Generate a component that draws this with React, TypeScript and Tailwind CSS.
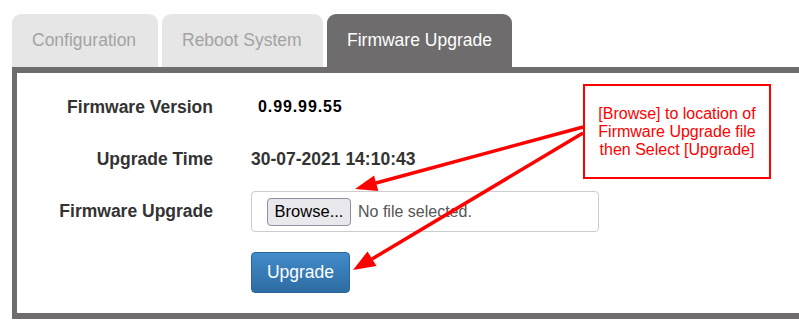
import React from 'react';

const tabs = [
  { label: 'Configuration', width: 'w-[146px]', active: false },
  { label: 'Reboot System', width: 'w-[161px]', active: false },
  { label: 'Firmware Upgrade', width: 'w-[185px]', active: true },
];

const App = () => {
  return (
    <div
      className="relative w-[799px] h-[332px] overflow-hidden bg-white pt-[14px] pl-[12px]"
      style={{ fontFamily: '"Liberation Sans", Arial, sans-serif' }}
    >
      {/* Tabs */}
      <div className="flex gap-[4px]">
        {tabs.map((t) => (
          <div
            key={t.label}
            className={`${t.width} h-[53px] rounded-t-[9px] pl-5 flex items-center text-[17.5px] ${
              t.active ? 'bg-[#6e6c6c] text-white pb-[1px]' : 'bg-[#e6e6e6] text-[#a3a3a3]'
            }`}
          >
            {t.label}
          </div>
        ))}
      </div>

      {/* Panel */}
      <div className="w-[800px] h-[252px] border-t-[6px] border-l-[5px] border-b-[6px] border-[#6e6c6c] pt-[8px]">
        <div className="flex items-center h-[52px]">
          <div className="w-[196px] text-right font-bold text-[17.5px] text-[#333]">Firmware Version</div>
          <div className="ml-[45px] font-bold text-[16px] text-black tracking-[0.9px]">0.99.99.55</div>
        </div>
        <div className="flex items-center h-[52px]">
          <div className="w-[196px] text-right font-bold text-[17.5px] text-[#333]">Upgrade Time</div>
          <div className="ml-[38px] font-bold text-[17.5px] text-[#333]">30-07-2021 14:10:43</div>
        </div>
        <div className="flex items-center mt-[6px] h-[41px]">
          <div className="w-[196px] text-right font-bold text-[17.5px] text-[#333]">Firmware Upgrade</div>
          <div className="ml-[38px] w-[348px] h-[41px] border border-[#cccccc] rounded-[4px] flex items-center pl-[15px] gap-[7px]">
            <div className="w-[84px] h-[28px] bg-[#e9e9ed] border border-[#8f8f9d] rounded-[4px] flex items-center justify-center text-[16.5px] text-black">
              Browse...
            </div>
            <span className="text-[16px] text-[#555]">No file selected.</span>
          </div>
        </div>
        <div className="flex mt-[20px]">
          <div className="ml-[234px] w-[99px] h-[41px] rounded-[4px] border border-[#2b669a] bg-gradient-to-b from-[#428bca] to-[#2d6ca2] flex items-center justify-center text-[17.5px] text-white">
            Upgrade
          </div>
        </div>
      </div>

      {/* Annotation box */}
      <div className="absolute left-[583px] top-[84px] w-[188px] h-[95px] border-2 border-[#ff0000] bg-white flex items-center justify-center text-center text-[16px] leading-[18px] text-[#ff0000]">
        <div>
          [Browse] to location of
          <br />
          Firmware Upgrade file
          <br />
          then Select [Upgrade]
        </div>
      </div>

      {/* Arrows */}
      <svg className="absolute left-0 top-0" width="799" height="332" viewBox="0 0 799 332">
        <line x1="583" y1="127" x2="376" y2="183" stroke="#ff0000" strokeWidth="3.5" />
        <polygon points="355,189 378.3,191 374.1,175.5" fill="#ff0000" />
        <line x1="583" y1="133" x2="372" y2="259" stroke="#ff0000" strokeWidth="3.5" />
        <polygon points="353,270 376.5,266 367.5,251.5" fill="#ff0000" />
      </svg>
    </div>
  );
};

export default App;
